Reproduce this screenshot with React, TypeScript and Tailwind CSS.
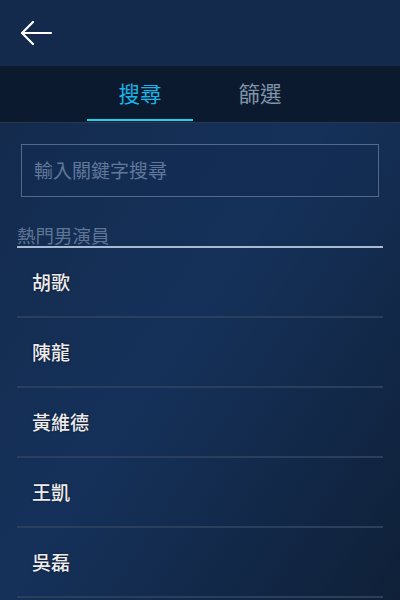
const actors = ['胡歌', '陳龍', '黃維德', '王凱', '吳磊']

export default function App() {
  return (
    <div
      className="flex h-[600px] w-[400px] flex-col overflow-hidden bg-gradient-to-br from-[#13294a] via-[#15315a] to-[#0f2038] text-white"
      style={{ fontFamily: '"Noto Sans CJK TC", "Noto Sans", sans-serif' }}
    >
      {/* header */}
      <div className="flex h-[66px] shrink-0 items-center bg-[#132a4c] px-[19px]">
        <svg width="34" height="28" viewBox="0 0 34 28" fill="none" stroke="white" strokeWidth="2.2" strokeLinecap="round" strokeLinejoin="round">
          <path d="M32 14H3" />
          <path d="M14 3L3 14l11 11" />
        </svg>
      </div>

      {/* tabs */}
      <div className="flex h-[57px] shrink-0 border-b border-[#26384f] bg-[#0c1a2f] pl-[87px]">
        <div className="flex w-[106px] flex-col items-center">
          <span className="mt-[13px] text-[21.5px] leading-[28px] text-[#1cb2e6]">搜尋</span>
          <div className="mt-auto mb-[1px] h-[2px] w-full bg-[#14d4f0]" />
        </div>
        <div className="flex w-[134px] justify-center">
          <span className="mt-[13px] text-[21.5px] leading-[28px] text-[#7f93a8]">篩選</span>
        </div>
      </div>

      {/* search input */}
      <div className="px-[21px] pt-[21px]">
        <div className="flex h-[53px] items-center border border-[#51698a] bg-[#132c52]/60 px-[12px] text-[19px] text-[#60779a]">
          輸入關鍵字搜尋
        </div>
      </div>

      {/* list */}
      <div className="mx-[17px] mt-[27px]">
        <div className="border-b-2 border-[#a9bbd0] text-[18.5px] leading-[22px] text-[#5e7595]">熱門男演員</div>
        {actors.map((name) => (
          <div
            key={name}
            className="flex h-[70px] items-center border-b-2 border-[#2a3f5c] pl-[15px] text-[19px] font-medium text-[#ececec] [text-shadow:0_0_2px_#0a1020]"
          >
            {name}
          </div>
        ))}
      </div>
    </div>
  )
}
